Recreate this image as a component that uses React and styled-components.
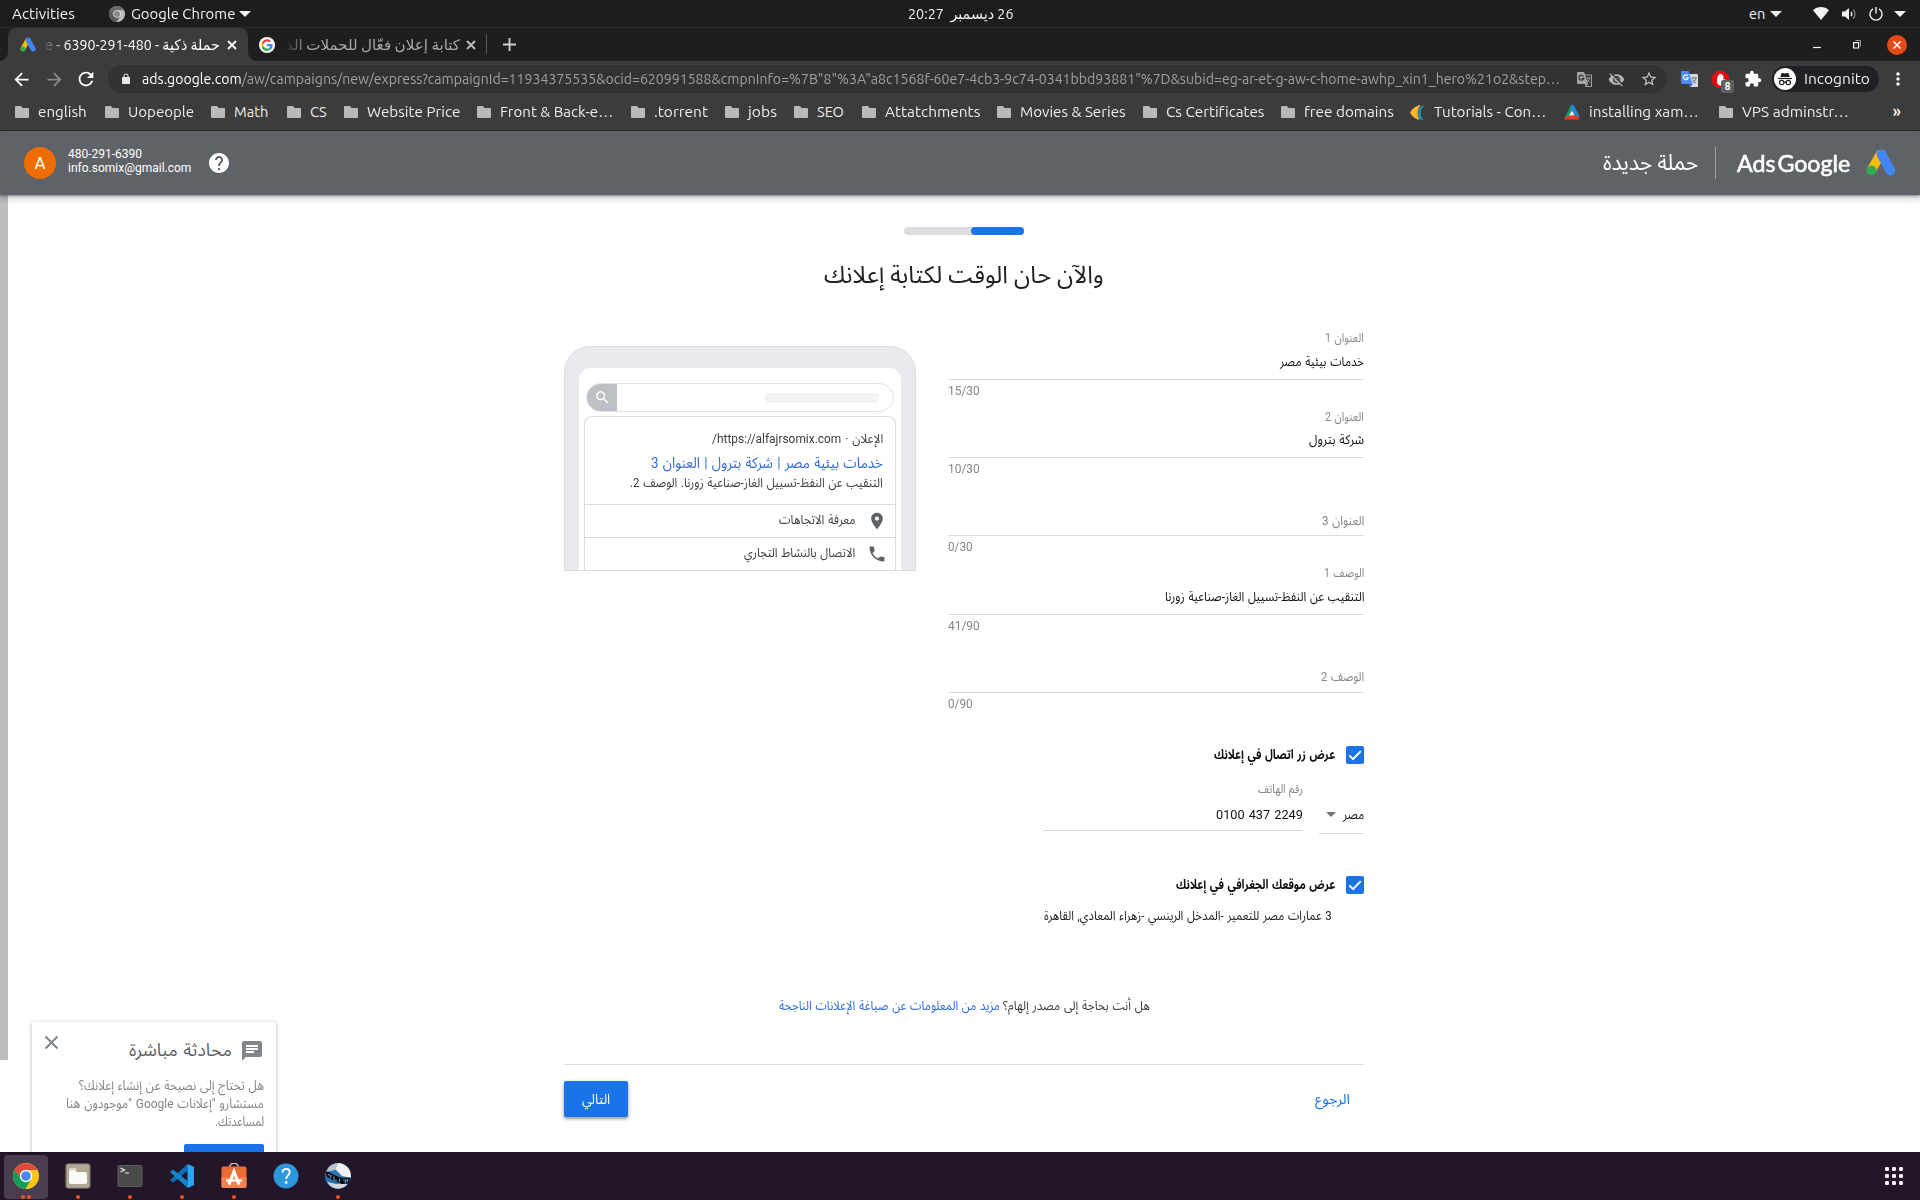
import React, { useLayoutEffect, useRef, useState } from 'react';
import styled, { createGlobalStyle } from 'styled-components';

const UI = 'Ubuntu, "Noto Sans", "DejaVu Sans", sans-serif';
const WEB = 'Roboto, "Noto Sans Arabic", "DejaVu Sans", sans-serif';

const GlobalStyle = createGlobalStyle`
  * { box-sizing: border-box; }
  html, body { margin: 0; padding: 0; overflow: hidden; }
  svg { display: block; flex: none; }
`;

/* ---------- text fitted to a fixed measure ---------- */
const FitBox = styled.span`
  display: block;
  flex: none;
  direction: ltr;
  white-space: nowrap;
  width: ${p => p.$w}px;
`;
const FitInner = styled.span`
  display: inline-block;
  transform-origin: 0 50%;
  direction: ${p => (p.$rtl ? 'rtl' : 'ltr')};
  color: ${p => p.$color || 'inherit'};
`;
function Fit({ w, rtl, color, children }) {
  const ref = useRef(null);
  const [scale, setScale] = useState(1);
  useLayoutEffect(() => {
    const natural = ref.current.offsetWidth;
    if (natural) setScale(w / natural);
  }, [w]);
  return (
    <FitBox $w={w}>
      <FitInner ref={ref} $rtl={rtl} $color={color} style={{ transform: `scaleX(${scale})` }}>
        {children}
      </FitInner>
    </FitBox>
  );
}

/* ---------- shell ---------- */
const Screen = styled.div`
  width: 1920px;
  height: 1200px;
  overflow: hidden;
  display: flex;
  flex-direction: column;
  background: #fff;
  font-family: ${UI};
`;
const TopBar = styled.div`
  height: 28px;
  flex: none;
  display: flex;
  align-items: center;
  background: #1d1d1d;
  border-bottom: 1px solid #2a2a2a;
  color: #f2f2f2;
  font-size: 14.6px;
  line-height: 26px;
`;
const TopLeft = styled.div`
  flex: 1;
  display: flex;
  align-items: center;
  padding-left: 12px;
`;
const TopRight = styled(TopLeft)`
  justify-content: flex-end;
  padding: 0 14px 0 0;
`;
const Clock = styled.div`
  padding-left: 2px;
`;
const Gap = styled.span`
  flex: none;
  width: ${p => p.$w}px;
`;

/* ---------- browser chrome ---------- */
const TabStrip = styled.div`
  height: 33px;
  flex: none;
  display: flex;
  background: #1e1e1e;
  color: #fff;
  font-size: 14.6px;
  line-height: 33px;
`;
const Tab = styled.div`
  position: relative;
  display: flex;
  align-items: center;
  width: ${p => p.$w}px;
  margin-left: ${p => (p.$active ? 8 : 0)}px;
  padding-left: ${p => (p.$active ? 12 : 11)}px;
  color: ${p => (p.$active ? '#fff' : '#a9a9a9')};
  background: ${p => (p.$active ? '#3c3c3c' : 'transparent')};
  border-radius: 8px 8px 0 0;
  &::before, &::after {
    content: '';
    display: ${p => (p.$active ? 'block' : 'none')};
    position: absolute;
    bottom: 0;
    width: 8px;
    height: 8px;
  }
  &::before { left: -8px; background: radial-gradient(circle at 0 0, transparent 7.5px, #3c3c3c 8px); }
  &::after { right: -8px; background: radial-gradient(circle at 100% 0, transparent 7.5px, #3c3c3c 8px); }
`;
const TabTitle = styled.div`
  margin-left: ${p => p.$ml}px;
  -webkit-mask-image: linear-gradient(90deg, rgba(0,0,0,.1), #000 22px);
  mask-image: linear-gradient(90deg, rgba(0,0,0,.1), #000 22px);
`;
const TabDivider = styled.div`
  width: 1px;
  height: 20px;
  margin: 6px 16px 0 0;
  background: #5a5a5a;
`;
const WindowButtons = styled.div`
  margin-left: auto;
  display: flex;
  align-items: center;
  padding-right: 13px;
`;
const Toolbar = styled.div`
  height: 36px;
  flex: none;
  display: flex;
  align-items: center;
  padding-left: 11px;
  background: #3c3c3c;
`;
const Omnibox = styled.div`
  display: flex;
  flex: none;
  align-items: center;
  width: 1559px;
  height: 28px;
  margin-left: 11px;
  padding-left: 12px;
  border-radius: 14px;
  background: #323232;
  color: #a0a0a0;
  font-size: 14.6px;
  line-height: 28px;
  b { font-weight: 400; color: #fff; }
`;
const ExtIcon = styled.div`
  position: relative;
`;
const ExtBadge = styled.span`
  position: absolute;
  left: 9px;
  top: 9px;
  width: 13px;
  height: 13px;
  border-radius: 2px;
  background: #5f6062;
  color: #fff;
  font: 700 10px/13px ${UI};
  text-align: center;
`;
const IncognitoPill = styled.div`
  display: flex;
  flex: none;
  align-items: center;
  width: 107px;
  height: 26px;
  padding-left: 2px;
  border-radius: 13px;
  background: #202124;
  color: #e8eaed;
  font-size: 14.6px;
  line-height: 26px;
`;
const Bookmarks = styled.div`
  height: 34px;
  flex: none;
  display: flex;
  align-items: center;
  padding-left: 15px;
  padding-bottom: 3px;
  background: #3c3c3c;
  border-bottom: 1px solid #242424;
  color: #ececec;
  font-size: 14.6px;
  line-height: 30px;
  font-variant-ligatures: none;
`;
const Bookmark = styled.div`
  display: flex;
  align-items: center;
  gap: 9px;
  width: ${p => p.$w}px;
`;
const More = styled.div`
  margin-left: auto;
  padding: 0 19px 2px 0;
  font-size: 16px;
  font-weight: 500;
  line-height: 26px;
  color: #fff;
`;

/* ---------- ads header ---------- */
const AdsHeader = styled.header`
  position: relative;
  z-index: 2;
  height: 64px;
  flex: none;
  display: flex;
  align-items: center;
  padding: 0 24px;
  background: #5f6368;
  color: #fff;
  font-family: ${WEB};
  box-shadow: 0 1px 2px rgba(60,64,67,.5), 0 2px 6px 2px rgba(60,64,67,.25);
`;
const Avatar = styled.div`
  width: 32px;
  height: 32px;
  border-radius: 50%;
  background: #ef6c00;
  font-size: 17px;
  line-height: 33px;
  text-align: center;
`;
const Account = styled.div`
  margin: 0 16px 0 12px;
  padding-bottom: 4px;
  font-size: 12px;
  line-height: 14px;
`;
const Brand = styled.div`
  margin-left: auto;
  display: flex;
  align-items: center;
  font-size: 22px;
  line-height: 32px;
`;
const BrandDivider = styled.div`
  width: 1px;
  height: 32px;
  margin: 0 21px 0 17px;
  background: #9aa0a6;
`;
const BrandName = styled.div`
  font-family: Lato, ${WEB};
  font-size: 23px;
  word-spacing: -4px;
  -webkit-text-stroke: 0.6px #fff;
  margin-right: 15px;
`;

/* ---------- page ---------- */
const Page = styled.div`
  position: relative;
  flex: 1;
  min-height: 0;
  overflow: hidden;
  display: flex;
  background: #fff;
  font-family: ${WEB};
`;
const Scrollbar = styled.div`
  width: 8px;
  height: 865px;
  background: #bdbdbd;
`;
const Main = styled.main`
  flex: 1;
  display: flex;
  flex-direction: column;
  align-items: center;
  padding-top: 32px;
  direction: rtl;
  word-spacing: 1px;
`;
const Progress = styled.div`
  width: 120px;
  height: 8px;
  border-radius: 4px;
  background: #dadce0;
`;
const ProgressDone = styled.div`
  width: 53px;
  height: 8px;
  border-radius: 4px;
  background: #1a73e8;
`;
const Title = styled.h1`
  margin: 20px 0 0;
  font-size: 24px;
  font-weight: 400;
  line-height: 40px;
  word-spacing: 0;
  color: #202124;
`;
const Columns = styled.div`
  display: flex;
  justify-content: space-between;
  width: 800px;
  height: 669px;
  margin-top: 31px;
`;
const Form = styled.div`
  width: 416px;
  display: flex;
  flex-direction: column;
`;
const Field = styled.div`
  height: 78.2px;
  padding-top: ${p => (p.$empty ? 28.5 : 2.4)}px;
`;
const Label = styled.div`
  height: 20px;
  font-size: ${p => (p.$big ? 13 : 12.5)}px;
  line-height: 20px;
  color: #868686;
`;
const Value = styled.div`
  height: 20px;
  margin-top: ${p => p.$mt}px;
  font-size: 13px;
  line-height: 20px;
  color: #111;
`;
const Rule = styled.div`
  margin-top: ${p => p.$mt}px;
  height: 1px;
  background: #dcdcdc;
`;
const Counter = styled.div`
  display: flex;
  justify-content: flex-end;
  margin-top: 1px;
  font-size: 12.7px;
  line-height: 20px;
  color: #868686;
`;
const CheckRow = styled.div`
  display: flex;
  align-items: center;
  gap: 11px;
  height: 18px;
  margin-top: ${p => p.$mt}px;
  font-size: 13px;
  font-weight: 700;
  line-height: 20px;
  color: #111;
`;
const CheckBox = styled.div`
  width: 18px;
  height: 18px;
  border-radius: 2px;
  background: #1a73e8;
`;
const PhoneRow = styled.div`
  display: flex;
  gap: 16px;
  height: 60px;
  margin-top: 15px;
  color: #111;
  font-size: 13px;
  line-height: 20px;
`;
const Country = styled.div`
  width: 45px;
  padding-top: 26px;
`;
const CountryPick = styled.div`
  display: flex;
  align-items: center;
  gap: 7px;
`;
const PhoneNumber = styled.div`
  width: 260px;
`;
const Address = styled.div`
  margin: 11.5px 32px 0 0;
  font-size: 13px;
  line-height: 22px;
  color: #202124;
`;

/* ---------- ad preview ---------- */
const Device = styled.div`
  width: 352px;
  height: 225px;
  margin-top: 20px;
  padding: 21px 14px 0;
  border: 1px solid #dadce0;
  border-radius: 26px 26px 0 0;
  background: #e8eaed;
`;
const DeviceScreen = styled.div`
  height: 202px;
  padding: 15px 5px 0;
  border-radius: 12px 12px 0 0;
  background: #fff;
`;
const SearchBar = styled.div`
  display: flex;
  align-items: center;
  justify-content: space-between;
  height: 29px;
  margin: 0 2px;
  padding-right: 14px;
  border: 1px solid #dfe1e5;
  border-radius: 15px;
  overflow: hidden;
`;
const SearchHint = styled.div`
  width: 114px;
  height: 10px;
  border-radius: 2px;
  background: #f1f3f4;
`;
const SearchButton = styled.div`
  width: 30px;
  height: 29px;
  padding: 6px 6px 0 0;
  background: #bdc1c6;
`;
const AdCard = styled.div`
  height: 154px;
  margin-top: 4px;
  border: 1px solid #dadce0;
  border-bottom: 0;
  border-radius: 8px 8px 0 0;
  color: #3c4043;
`;
const AdCopy = styled.div`
  height: 88px;
  padding: 12px 12px 0 0;
  border-bottom: 1px solid #dadce0;
`;
const AdLine = styled.div`
  display: flex;
  font-size: ${p => p.$size}px;
  line-height: ${p => p.$lh}px;
`;
const AdAction = styled.div`
  display: flex;
  align-items: center;
  height: ${p => (p.$last ? 32 : 33)}px;
  padding-right: 8px;
  gap: 12px;
  border-bottom: ${p => (p.$last ? 0 : 1)}px solid #dadce0;
  font-size: 13px;
  line-height: 28px;
  > span { margin-bottom: 3px; }
`;

/* ---------- footer ---------- */
const Help = styled.div`
  display: flex;
  gap: 3px;
  font-size: 13px;
  line-height: 22px;
  color: #3c4043;
`;
const Footer = styled.div`
  display: flex;
  align-items: center;
  justify-content: space-between;
  width: 800px;
  height: 69px;
  margin-top: 47px;
  padding-right: 14px;
  border-top: 1px solid #dadce0;
  font-size: 14px;
  line-height: 32px;
  color: #1a73e8;
`;
const NextButton = styled.button`
  display: flex;
  justify-content: center;
  width: 64px;
  height: 36px;
  padding: 2px 0;
  border: 0;
  border-radius: 2px;
  background: #1a73e8;
  color: #fff;
  font: 400 14px/32px ${WEB};
  box-shadow: 0 2px 3px rgba(0,0,0,.3), 0 1px 5px rgba(0,0,0,.18);
`;

/* ---------- chat popup ---------- */
const Chat = styled.aside`
  position: absolute;
  left: 32px;
  top: 827px;
  width: 244px;
  height: 160px;
  padding: 13px 12px 0 12px;
  background: #fff;
  border-radius: 2px;
  box-shadow: 0 1px 4px rgba(60,64,67,.4);
  color: #80868b;
  font-size: 13.4px;
  line-height: 18px;
  word-spacing: 1px;
`;
const ChatHead = styled.div`
  display: flex;
  align-items: flex-start;
  height: 42px;
  font-size: 18px;
  line-height: 29px;
  color: #5f6368;
  svg:last-child { margin-top: 4px; }
`;
const ChatBody = styled.div`
  display: flex;
  flex-direction: column;
  align-items: flex-end;
`;
const ChatButton = styled.div`
  width: 80px;
  height: 32px;
  margin: 13px 0 0 auto;
  border-radius: 2px;
  background: #1a73e8;
`;

/* ---------- dock ---------- */
const Dock = styled.div`
  height: 48px;
  flex: none;
  display: flex;
  align-items: center;
  gap: 8px;
  padding: 0 16px 0 4px;
  border-top: 1px solid #1b1420;
  background: #241629;
`;
const DockItem = styled.div`
  position: relative;
  width: 44px;
  height: 44px;
  padding: 8px 9px;
  border-radius: 4px;
  background: ${p => (p.$active ? '#4b3d50' : 'transparent')};
`;
const Dots = styled.div`
  position: absolute;
  left: 0;
  right: 0;
  bottom: 0;
  display: flex;
  justify-content: center;
  gap: 2px;
  i { width: 4px; height: 4px; border-radius: 50%; background: #e95420; }
`;
const DockEnd = styled.div`
  margin-left: auto;
  padding-bottom: 1px;
`;

/* ---------- icons ---------- */
const Mat = ({ d, s = 24, c = '#fff' }) => (
  <svg width={s} height={s} viewBox="0 0 24 24" fill={c}><path d={d} /></svg>
);
const P = {
  back: 'M20 11H7.83l5.59-5.59L12 4l-8 8 8 8 1.41-1.41L7.83 13H20v-2z',
  fwd: 'M12 4l-1.41 1.41L16.17 11H4v2h12.17l-5.58 5.59L12 20l8-8z',
  reload: 'M17.65 6.35C16.2 4.9 14.21 4 12 4c-4.42 0-7.99 3.58-7.99 8s3.57 8 7.99 8c3.73 0 6.84-2.55 7.73-6h-2.08c-.82 2.33-3.04 4-5.65 4-3.31 0-6-2.69-6-6s2.69-6 6-6c1.66 0 3.14.69 4.22 1.78L13 11h7V4l-2.35 2.35z',
  lock: 'M18 8h-1V6c0-2.76-2.24-5-5-5S7 3.24 7 6v2H6c-1.1 0-2 .9-2 2v10c0 1.1.9 2 2 2h12c1.1 0 2-.9 2-2V10c0-1.1-.9-2-2-2zM9 6c0-1.66 1.34-3 3-3s3 1.34 3 3v2H9V6z',
  eyeOff: 'M12 7c2.76 0 5 2.24 5 5 0 .65-.13 1.26-.36 1.83l2.92 2.92c1.51-1.26 2.7-2.89 3.43-4.75-1.73-4.39-6-7.5-11-7.5-1.4 0-2.74.25-3.98.7l2.16 2.16C10.74 7.13 11.35 7 12 7zM2 4.27l2.28 2.28.46.46C3.08 8.3 1.78 10.02 1 12c1.73 4.39 6 7.5 11 7.5 1.55 0 3.03-.3 4.38-.84l.42.42L19.73 22 21 20.73 3.27 3 2 4.27zM7.53 9.8l1.55 1.55c-.05.21-.08.43-.08.65 0 1.66 1.34 3 3 3 .22 0 .44-.03.65-.08l1.55 1.55c-.67.33-1.41.53-2.2.53-2.76 0-5-2.24-5-5 0-.79.2-1.53.53-2.2zm4.31-.78l3.15 3.15.02-.16c0-1.66-1.34-3-3-3l-.17.01z',
  star: 'M22 9.24l-7.19-.62L12 2 9.19 8.63 2 9.24l5.46 4.73L5.82 21 12 17.27 18.18 21l-1.63-7.03L22 9.24zM12 15.4l-3.76 2.27 1-4.28-3.32-2.88 4.38-.38L12 6.1l1.71 4.04 4.38.38-3.32 2.88 1 4.28L12 15.4z',
  puzzle: 'M20.5 11H19V7c0-1.1-.9-2-2-2h-4V3.500C13 2.120 11.880 1 10.500 1S8 2.120 8 3.500V5H4c-1.100 0-1.990.9-1.990 2v3.800H3.500c1.490 0 2.700 1.210 2.700 2.700s-1.210 2.700-2.700 2.700H2V20c0 1.100.9 2 2 2h3.800v-1.500c0-1.490 1.210-2.700 2.700-2.700s2.700 1.210 2.700 2.700V22H17c1.100 0 2-.9 2-2v-4h1.500c1.380 0 2.500-1.120 2.500-2.500S21.880 11 20.500 11z',
  dots: 'M12 8c1.100 0 2-.9 2-2s-.9-2-2-2-2 .9-2 2 .9 2 2 2zm0 2c-1.100 0-2 .9-2 2s.9 2 2 2 2-.9 2-2-.9-2-2-2zm0 6c-1.100 0-2 .9-2 2s.9 2 2 2 2-.9 2-2-.9-2-2-2z',
  help: 'M12 2C6.480 2 2 6.480 2 12s4.480 10 10 10 10-4.480 10-10S17.520 2 12 2zm1 17h-2v-2h2v2zm2.070-7.750l-.9.920C13.450 12.900 13 13.500 13 15h-2v-.5c0-1.100.450-2.100 1.170-2.830l1.240-1.260c.370-.360.590-.860.590-1.410 0-1.100-.9-2-2-2s-2 .9-2 2H8c0-2.210 1.790-4 4-4s4 1.790 4 4c0 .880-.360 1.680-.930 2.250z',
  pin: 'M12 2C8.130 2 5 5.130 5 9c0 5.250 7 13 7 13s7-7.750 7-13c0-3.870-3.130-7-7-7zm0 9.500c-1.380 0-2.500-1.120-2.500-2.500s1.120-2.500 2.500-2.500 2.500 1.120 2.500 2.500-1.120 2.500-2.500 2.500z',
  phone: 'M6.620 10.790c1.440 2.830 3.760 5.140 6.590 6.590l2.200-2.200c.270-.270.670-.360 1.020-.240 1.120.370 2.330.570 3.570.570.550 0 1 .450 1 1V20c0 .550-.450 1-1 1-9.390 0-17-7.610-17-17 0-.550.450-1 1-1h3.500c.550 0 1 .450 1 1 0 1.250.2 2.450.570 3.570.110.350.030.740-.250 1.020l-2.200 2.200z',
  search: 'M15.500 14h-.790l-.280-.270C15.410 12.590 16 11.110 16 9.500 16 5.910 13.090 3 9.500 3S3 5.910 3 9.500 5.910 16 9.500 16c1.610 0 3.090-.590 4.230-1.570l.270.280v.790l5 4.990L20.490 19l-4.990-5zm-6 0C7.010 14 5 11.990 5 9.500S7.010 5 9.500 5 14 7.010 14 9.500 11.990 14 9.500 14z',
  chat: 'M20 2H4c-1.100 0-1.990.9-1.990 2L2 22l4-4h14c1.100 0 2-.9 2-2V4c0-1.100-.9-2-2-2zM6 9h12v2H6V9zm8 5H6v-2h8v2zm4-6H6V6h12v2z',
};
const Caret = ({ w = 12, h = 6, c = '#f2f2f2' }) => (
  <svg width={w} height={h} viewBox="0 0 12 6" preserveAspectRatio="none"><path d="M0 0h12L6 6z" fill={c} /></svg>
);
const Cross = ({ s = 9, c = '#fff', sw = 1.8 }) => (
  <svg width={s} height={s} viewBox="0 0 10 10"><path d="M1 1l8 8M9 1L1 9" stroke={c} strokeWidth={sw} /></svg>
);
const AdsLogo = ({ w = 30, h = 28 }) => (
  <svg width={w} height={h} viewBox="0 .7 30 28">
    <path d="M14.300 6.300L5.600 21.500" stroke="#fbbc04" strokeWidth="9.400" strokeLinecap="round" />
    <path d="M15.400 5.800l9.100 16.500" stroke="#4285f4" strokeWidth="9.600" strokeLinecap="round" />
    <circle cx="5.600" cy="22.200" r="4.900" fill="#34a853" />
  </svg>
);
const GoogleG = () => (
  <svg width="16" height="16" viewBox="0 0 48 48">
    <circle cx="24" cy="24" r="24" fill="#fff" />
    <g transform="translate(6.500 6.500) scale(.73)">
      <path fill="#EA4335" d="M24 9.500c3.540 0 6.710 1.220 9.210 3.600l6.850-6.850C35.900 2.380 30.470 0 24 0 14.620 0 6.510 5.380 2.560 13.220l7.980 6.190C12.430 13.720 17.740 9.500 24 9.500z" />
      <path fill="#4285F4" d="M46.980 24.550c0-1.570-.150-3.090-.380-4.550H24v9.020h12.940c-.580 2.960-2.260 5.480-4.780 7.180l7.730 6c4.510-4.180 7.090-10.360 7.090-17.650z" />
      <path fill="#FBBC05" d="M10.530 28.590c-.480-1.450-.760-2.990-.760-4.590s.270-3.140.760-4.590l-7.980-6.190C.920 16.460 0 20.120 0 24c0 3.880.920 7.540 2.560 10.780l7.970-6.190z" />
      <path fill="#34A853" d="M24 48c6.480 0 11.930-2.130 15.890-5.810l-7.730-6c-2.150 1.450-4.920 2.300-8.160 2.300-6.260 0-11.570-4.220-13.470-9.910l-7.980 6.190C6.510 42.620 14.620 48 24 48z" />
    </g>
  </svg>
);
const ChromeIcon = ({ s = 26, mono }) => (
  <svg width={s} height={s} viewBox="0 0 26 26">
    <circle cx="13" cy="13" r="13" fill={mono ? '#8a8a8a' : '#fbc116'} />
    <path d="M1.740 6.500A13 13 0 0 1 24.300 6.900H13L7.500 16z" fill={mono ? '#6c6c6c' : '#dd4b3e'} />
    <path d="M1.740 6.500A13 13 0 0 0 12.500 26L18.300 16.500 13 19 7.600 16z" fill={mono ? '#5a5a5a' : '#109d58'} />
    <path d="M12.500 26A13 13 0 0 0 24.300 6.900H13l5.300 9.600z" fill={mono ? '#bdbdbd' : '#fcc419'} />
    <circle cx="13" cy="13" r="6.200" fill={mono ? '#ddd' : '#fff'} />
    <circle cx="13" cy="13" r="4.800" fill={mono ? '#888' : '#4a86f0'} />
  </svg>
);
const Folder = () => (
  <svg width="14" height="12" viewBox="0 0 14 12"><path d="M1 0h5l1.500 2H13a1 1 0 0 1 1 1v8a1 1 0 0 1-1 1H1a1 1 0 0 1-1-1V1a1 1 0 0 1 1-1z" fill="#b9b9b9" /></svg>
);
const TutorialsIcon = () => (
  <svg width="15" height="15" viewBox="0 0 15 15">
    <path d="M10.500 0C6 .500 2 4 0 7.500c1.500 3 5 6.500 9.500 7.500C7 10 7 5 10.500 0z" fill="#fdb62b" />
    <path d="M15 .500C9.500 3 9.500 12 14 14.700 8 15 8 12 8.300 7.500S11 .500 15 .500z" fill="#1f93b8" />
  </svg>
);
const XamIcon = () => (
  <svg width="16" height="15" viewBox="0 0 16 15">
    <path d="M7 0L0 14l5-3 4-6z" fill="#149a63" />
    <path d="M6.500 0h3L16 12l-4.500-1L7 4z" fill="#2389d6" />
    <path d="M0 14.500L3.500 10.500H13l3 4z" fill="#e53a2c" />
    <path d="M8 5.500l2.700 5H5z" fill="#e9eef2" />
  </svg>
);
const TranslateMono = () => (
  <svg width="15" height="15" viewBox="0 0 15 15">
    <path d="M1 0h6l1 2.500h6a1 1 0 0 1 1 1V14a1 1 0 0 1-1 1H8.500L8 12H1a1 1 0 0 1-1-1V1a1 1 0 0 1 1-1z" fill="#a6a6a6" />
    <path d="M6.600 4.400A2.500 2.500 0 1 0 6.900 6.300H4.600" fill="none" stroke="#333" strokeWidth="1.200" />
    <path d="M8.300 3.500h5.700v10.400H9.500L11 12 8.300 3.500z" fill="#333" />
    <path d="M9.300 6h4M11.300 5v1M12.600 6c-.4 2-1.500 3.200-2.600 4M10.400 7.500c.600 1.300 1.500 2.200 2.600 3" fill="none" stroke="#a6a6a6" />
  </svg>
);
const TranslateColor = () => (
  <svg width="17" height="16" viewBox="0 0 17 16">
    <path d="M6 3h10a1 1 0 0 1 1 1v11a1 1 0 0 1-1 1H9z" fill="#d5d8dc" />
    <path d="M1 0h6.500L11.500 13H1a1 1 0 0 1-1-1V1a1 1 0 0 1 1-1z" fill="#4a8af4" />
    <path d="M8 13h3.500L9.300 16z" fill="#2a56c6" />
    <path d="M6.900 5A2.400 2.400 0 1 0 7.200 6.600H5" fill="none" stroke="#fff" strokeWidth="1.200" />
    <path d="M10.500 7H16M13 6v1M15 7c-.5 2-1.700 3.500-3 4.500M11.500 8.500c.700 1.500 2 2.800 3.500 3.700" fill="none" stroke="#5f7a83" />
  </svg>
);
const Adblock = () => (
  <svg width="17" height="17" viewBox="0 0 17 17">
    <path d="M5 0h7l5 5v7l-5 5H5l-5-5V5z" fill="#e40d0d" />
    <path d="M5 7.500v2.700C5 13 6.500 14.500 8.700 14.500c2 0 2.900-1 3.400-2.500l1.200-3.500c-.9-.6-1.500 0-1.900 1V4.200c-.9-.5-1.300 0-1.300.5V3.300c-.8-.6-1.400-.2-1.400.4V3c-.9-.6-1.500-.2-1.500.5v.9c-.9-.5-1.400 0-1.400.5z" fill="#fff" />
  </svg>
);
const IncognitoIcon = () => (
  <svg width="22" height="22" viewBox="0 0 22 22">
    <circle cx="11" cy="11" r="11" fill="#fff" />
    <path d="M7.600 5h1.500l1.900.500L12.900 5h1.500l1.300 4H6.300z" fill="#202124" />
    <path d="M4 10.500h14" stroke="#202124" strokeWidth="1.200" />
    <g fill="none" stroke="#202124" strokeWidth="1.200"><circle cx="7.700" cy="14.500" r="2.200" /><circle cx="14.300" cy="14.500" r="2.200" /><path d="M9.800 14.200c.8-.5 1.600-.5 2.400 0" /></g>
  </svg>
);
const Wifi = () => (
  <svg width="16" height="13" viewBox="0 0 16 13"><path d="M0 3.200C4.500-1 11.500-1 16 3.200L8 13z" fill="#f2f2f2" /></svg>
);
const Volume = () => (
  <svg width="15" height="14" viewBox="0 0 15 14">
    <path d="M0 4.500h3L7 1v12L3 9.500H0z" fill="#f2f2f2" />
    <path d="M9 4.800c1 1.300 1 3.100 0 4.400" fill="none" stroke="#f2f2f2" strokeWidth="1.300" />
    <path d="M11.300 2.500c2.300 2.500 2.300 6.500 0 9" fill="none" stroke="#8a8a8a" strokeWidth="1.200" />
  </svg>
);
const Power = () => (
  <svg width="14" height="14" viewBox="0 0 14 14" fill="none" stroke="#f2f2f2" strokeWidth="1.400">
    <path d="M7 0v6.500M4 1.900a6 6 0 1 0 6 0" />
  </svg>
);
const FilesIcon = () => (
  <svg width="26" height="26" viewBox="0 0 26 26">
    <rect x=".5" y=".5" width="25" height="25" rx="3" fill="#8f8877" />
    <rect x="2" y="1.500" width="22" height="23" rx="2" fill="#aea894" />
    <path d="M4 7a2 2 0 0 1 2-2h4.500L12 7h-1v4H4z" fill="#dcd8ce" />
    <path d="M6 7.500h4.500L12 9h8a2 2 0 0 1 2 2v8a2 2 0 0 1-2 2H6a2 2 0 0 1-2-2V9.500a2 2 0 0 1 2-2z" fill="#fbfaf8" />
  </svg>
);
const TerminalIcon = () => (
  <svg width="26" height="26" viewBox="0 0 26 26">
    <rect x=".5" y="2" width="25" height="22" rx="2" fill="#5e5c5a" />
    <rect x="1.500" y="3" width="23" height="20" rx="1" fill="#4a4a4a" />
    <path d="M3.500 5l4 2-4 2M8 10h4" fill="none" stroke="#eee" strokeWidth="1.200" />
  </svg>
);
const CodeIcon = () => (
  <svg width="26" height="26" viewBox="0 0 26 26">
    <path d="M18.500 1v7L4 19.500 1 17z" fill="#0a6fb8" />
    <path d="M18.500 25v-7L4 6.500 1 9z" fill="#1285cf" />
    <path d="M18.500 1L25 4v18l-6.500 3z" fill="#28a8f0" />
  </svg>
);
const SoftwareIcon = () => (
  <svg width="26" height="26" viewBox="0 0 26 26">
    <path d="M8.800 5V4.200a4.200 3.800 0 0 1 8.400 0V5" fill="none" stroke="#d8b59f" strokeWidth="1.600" transform="translate(0 -.2)" />
    <rect x=".5" y="3.500" width="25" height="21.500" rx="2" fill="#ee6a33" />
    <path d="M.5 14h25v9a2 2 0 0 1-2 2h-21a2 2 0 0 1-2-2z" fill="#f58150" />
    <path d="M8 21.500L13 8.500l5 13" fill="none" stroke="#fff" strokeWidth="3" />
    <path d="M5 17.500h16" stroke="#fff" strokeWidth="2.200" />
  </svg>
);
const DockHelpIcon = () => (
  <svg width="26" height="26" viewBox="0 0 26 26">
    <circle cx="13" cy="13" r="12.500" fill="#2c97dd" />
    <path d="M9.500 9.500c0-2.200 1.600-3.500 3.600-3.500s3.600 1.300 3.600 3.300c0 3-3.500 3.200-3.500 6.700" fill="none" stroke="#fff" strokeWidth="1.900" />
    <circle cx="13.100" cy="19.500" r="1.400" fill="#fff" />
  </svg>
);
const GlobeIcon = () => (
  <svg width="26" height="26" viewBox="1 0 26 26">
    <circle cx="14" cy="13" r="13" fill="#2b73b4" />
    <path d="M14 0a13 13 0 0 1 12.800 15L18 13 11 6z" fill="#eef0f2" />
    <path d="M5 4C8 1 11 0 14 0l-3 7-9 2z" fill="#b9c3cb" />
    <path d="M3 19l9 2 12-1c-5 7.500-15 8-21-1z" fill="#d3d7da" />
    <path d="M1.500 8.500l3 .500 9 4.500 5 1.500 8-.500-1.500 6-7 .500-8-3-7-4z" fill="#0b0b0f" />
    <path d="M4 11.500l3 1-1 3M10 13.500v3.500l3 1M16 15.500l-1 4M19 17h3l-1 3M24 16l-1 3" stroke="#5c9bd0" strokeWidth="1.100" fill="none" />
  </svg>
);
const GridIcon = () => (
  <svg width="20" height="20" viewBox="0 0 20 20" fill="#f3f1f3">
    {[3, 10, 17].map(y => [3, 10, 17].map(x => <rect key={x + '-' + y} x={x - 2} y={y - 2} width="4" height="4" rx="1.300" />))}
  </svg>
);

/* ---------- data ---------- */
const bookmarks = [
  ['english', 49, 90], ['Uopeople', 66, 106], ['Math', 34, 76], ['CS', 17, 57],
  ['Website Price', 93, 133], ['Front & Back-e…', 113, 154], ['.torrent', 54, 94],
  ['jobs', 29, 69], ['SEO', 27, 68], ['Attatchments', 95, 135], ['Movies & Series', 106, 146],
  ['Cs Certificates', 98, 138], ['free domains', 90, 129],
  ['Tutorials - Con…', 112, 154, TutorialsIcon], ['installing xam…', 110, 155, XamIcon],
  ['VPS adminstr…', 107, 135],
];
const fields = [
  { label: 'العنوان 1', lw: 39, value: 'خدمات بيئية مصر', vw: 84, count: '15/30', cw: 32 },
  { label: 'العنوان 2', lw: 39, value: 'شركة بترول', vw: 55, count: '10/30', cw: 32 },
  { label: 'العنوان 3', lw: 42, count: '0/30', cw: 25 },
  { label: 'الوصف 1', lw: 40, value: 'التنقيب عن النفظ-تسييل الغاز-صناعية زورنا', vw: 199, count: '41/90', cw: 32 },
  { label: 'الوصف 2', lw: 43, count: '0/90', cw: 25 },
];
const dock = [
  [ChromeIcon, 2], [FilesIcon, 1], [TerminalIcon, 1], [CodeIcon, 1], [SoftwareIcon, 1], [DockHelpIcon, 0], [GlobeIcon, 1],
];

function Check() {
  return (
    <CheckBox>
      <svg width="18" height="18" viewBox="0 0 18 18"><path d="M3.300 9.400l3.700 3.700 7.800-8" fill="none" stroke="#fff" strokeWidth="2" /></svg>
    </CheckBox>
  );
}

export default function App() {
  return (
    <Screen>
      <GlobalStyle />
      <TopBar>
        <TopLeft>
          <Fit w={63}>Activities</Fit>
          <Gap $w={34} />
          <ChromeIcon s={16} mono />
          <Gap $w={6} />
          <Fit w={104}>Google Chrome</Fit>
          <Gap $w={4} />
          <Caret />
        </TopLeft>
        <Clock><Fit w={105} rtl>26 ديسمبر&nbsp; 20:27</Fit></Clock>
        <TopRight>
          <Fit w={16}>en</Fit>
          <Gap $w={5} />
          <Caret />
          <Gap $w={31} />
          <Wifi />
          <Gap $w={13} />
          <Volume />
          <Gap $w={12} />
          <Power />
          <Gap $w={11} />
          <Caret />
        </TopRight>
      </TopBar>

      <TabStrip>
        <Tab $active $w={240}>
          <AdsLogo w={16} h={16} />
          <TabTitle $ml={9}><Fit w={175} rtl>حملة ذكية - 480-291-6390 - e</Fit></TabTitle>
          <Gap $w={7} />
          <Cross s={10} />
        </Tab>
        <Tab $w={238}>
          <GoogleG />
          <TabTitle $ml={11}><Fit w={174} rtl>كتابة إعلان فعّال للحملات الذ</Fit></TabTitle>
          <Gap $w={6} />
          <Cross s={10} c="#bdbdbd" />
        </Tab>
        <TabDivider />
        <svg width="13" height="32" viewBox="0 0 13 32"><path d="M6.500 10v13M0 16.500h13" stroke="#d0d0d0" strokeWidth="1.800" /></svg>
        <WindowButtons>
          <svg width="8" height="10" viewBox="0 0 8 10"><path d="M0 7.500h8" stroke="#fff" strokeWidth="1.200" /></svg>
          <Gap $w={32} />
          <svg width="8" height="9" viewBox="0 0 8 9"><path d="M.6 2.600h5v5.400h-5z" fill="none" stroke="#fff" strokeWidth="1.200" /><path d="M2.500.5h5v6" fill="none" stroke="#999" /></svg>
          <Gap $w={26} />
          <svg width="20" height="20" viewBox="0 0 20 20"><circle cx="10" cy="10" r="10" fill="#e24b17" /><path d="M6.500 6.500l7 7M13.500 6.500l-7 7" stroke="#fff" strokeWidth="1.500" /></svg>
        </WindowButtons>
      </TabStrip>

      <Toolbar>
        <Mat d={P.back} s={21} />
        <Gap $w={12} />
        <Mat d={P.fwd} s={21} c="#8a8a8a" />
        <Gap $w={10} />
        <Mat d={P.reload} s={22} />
        <Omnibox>
          <Mat d={P.lock} s={12} c="#e8e8e8" />
          <Gap $w={10} />
          <Fit w={1418}>
            <b>ads.google.com</b>/aw/campaigns/new/express?campaignId=11934375535&amp;ocid=620991588&amp;cmpnInfo=%7B"8"%3A"a8c1568f-60e7-4cb3-9c74-0341bbd93881"%7D&amp;subid=eg-ar-et-g-aw-c-home-awhp_xin1_hero%21o2&amp;step…
          </Fit>
          <Gap $w={17} />
          <TranslateMono />
          <Gap $w={16} />
          <Mat d={P.eyeOff} s={17} c="#b5b5b5" />
          <Gap $w={15} />
          <Mat d={P.star} s={18} c="#c4c4c4" />
        </Omnibox>
        <Gap $w={14} />
        <TranslateColor />
        <Gap $w={14} />
        <ExtIcon><Adblock /><ExtBadge>8</ExtBadge></ExtIcon>
        <Gap $w={15} />
        <Mat d={P.puzzle} s={18} />
        <Gap $w={10} />
        <IncognitoPill>
          <IncognitoIcon />
          <Gap $w={8} />
          <Fit w={66}>Incognito</Fit>
        </IncognitoPill>
        <Gap $w={9} />
        <Mat d={P.dots} s={20} />
      </Toolbar>

      <Bookmarks>
        {bookmarks.map(([name, tw, w, Icon = Folder]) => (
          <Bookmark key={name} $w={w}><Icon /><Fit w={tw}>{name}</Fit></Bookmark>
        ))}
        <More>»</More>
      </Bookmarks>

      <AdsHeader>
        <Avatar>A</Avatar>
        <Account>
          <Fit w={74}>480-291-6390</Fit>
          <Fit w={123}>info.somix@gmail.com</Fit>
        </Account>
        <Mat d={P.help} s={24} />
        <Brand>
          <Fit w={95} rtl>حملة جديدة</Fit>
          <BrandDivider />
          <BrandName><Fit w={113} rtl>Ads Google</Fit></BrandName>
          <Gap $w={1} />
          <AdsLogo />
        </Brand>
      </AdsHeader>

      <Page>
        <Scrollbar />
        <Main>
          <Progress><ProgressDone /></Progress>
          <Title><Fit w={280} rtl>والآن حان الوقت لكتابة إعلانك</Fit></Title>
          <Columns>
            <Form>
              {fields.map(f => (
                <Field key={f.label} $empty={!f.value}>
                  <Label $big={!f.value}><Fit w={f.lw} rtl>{f.label}</Fit></Label>
                  {f.value && <Value $mt={3.6}><Fit w={f.vw} rtl>{f.value}</Fit></Value>}
                  <Rule $mt={f.value ? 7 : 4.5} />
                  <Counter><Fit w={f.cw}>{f.count}</Fit></Counter>
                </Field>
              ))}
              <CheckRow $mt={29}><Check /><Fit w={121} rtl>عرض زر اتصال في إعلانك</Fit></CheckRow>
              <PhoneRow>
                <Country>
                  <CountryPick><Fit w={21} rtl>مصر</Fit><Caret w={10} h={5} c="#757575" /></CountryPick>
                  <Rule $mt={8} />
                </Country>
                <PhoneNumber>
                  <Label><Fit w={45} rtl>رقم الهاتف</Fit></Label>
                  <Value $mt={6}><Fit w={87}>0100 437 2249</Fit></Value>
                  <Rule $mt={5} />
                </PhoneNumber>
              </PhoneRow>
              <CheckRow $mt={37}><Check /><Fit w={159} rtl>عرض موقعك الجغرافي في إعلانك</Fit></CheckRow>
              <Address><Fit w={288} rtl>3 عمارات مصر للتعمير -المدخل الرينسي -زهراء المعادي, القاهرة</Fit></Address>
            </Form>

            <Device>
              <DeviceScreen>
                <SearchBar>
                  <SearchHint />
                  <SearchButton><Mat d={P.search} s={17} /></SearchButton>
                </SearchBar>
                <AdCard>
                  <AdCopy>
                    <AdLine $size={12.7} $lh={20}><Fit w={171} rtl>الإعلان · https://alfajrsomix.com/</Fit></AdLine>
                    <AdLine $size={15} $lh={28}><Fit w={232} rtl color="#2f6bdd">خدمات بيئية مصر | شركة بترول | العنوان 3</Fit></AdLine>
                    <AdLine $size={13} $lh={12}><Fit w={253} rtl>التنقيب عن النفظ-تسييل الغاز-صناعية زورنا. الوصف 2.</Fit></AdLine>
                  </AdCopy>
                  <AdAction><Mat d={P.pin} s={20} c="#5f6368" /><Fit w={76} rtl>معرفة الاتجاهات</Fit></AdAction>
                  <AdAction $last><Mat d={P.phone} s={20} c="#5f6368" /><Fit w={111} rtl>الاتصال بالنشاط التجاري</Fit></AdAction>
                </AdCard>
              </DeviceScreen>
            </Device>
          </Columns>

          <Help>
            <Fit w={147} rtl>هل أنت بحاجة إلى مصدر إلهام؟</Fit>
            <Fit w={221} rtl color="#2f6bdd">مزيد من المعلومات عن صياغة الإعلانات الناجحة</Fit>
          </Help>
          <Footer>
            <Fit w={35} rtl>الرجوع</Fit>
            <NextButton><Fit w={28} rtl>التالي</Fit></NextButton>
          </Footer>
        </Main>

        <Chat>
          <ChatHead>
            <Cross s={15} c="#80868b" sw={1.4} />
            <Gap $w={70} />
            <Fit w={103} rtl>محادثة مباشرة</Fit>
            <Gap $w={8} />
            <Mat d={P.chat} s={24} c="#80868b" />
          </ChatHead>
          <ChatBody>
            <Fit w={185} rtl>هل تحتاج إلى نصيحة عن إنشاء إعلانك؟</Fit>
            <Fit w={198} rtl>مستشارو "إعلانات Google "موجودون هنا</Fit>
            <Fit w={49} rtl>لمساعدتك.</Fit>
          </ChatBody>
          <ChatButton />
        </Chat>
      </Page>

      <Dock>
        {dock.map(([Icon, n], i) => (
          <DockItem key={i} $active={i === 0}>
            <Icon />
            <Dots>{Array.from({ length: n }, (_, k) => <i key={k} />)}</Dots>
          </DockItem>
        ))}
        <DockEnd><GridIcon /></DockEnd>
      </Dock>
    </Screen>
  );
}
